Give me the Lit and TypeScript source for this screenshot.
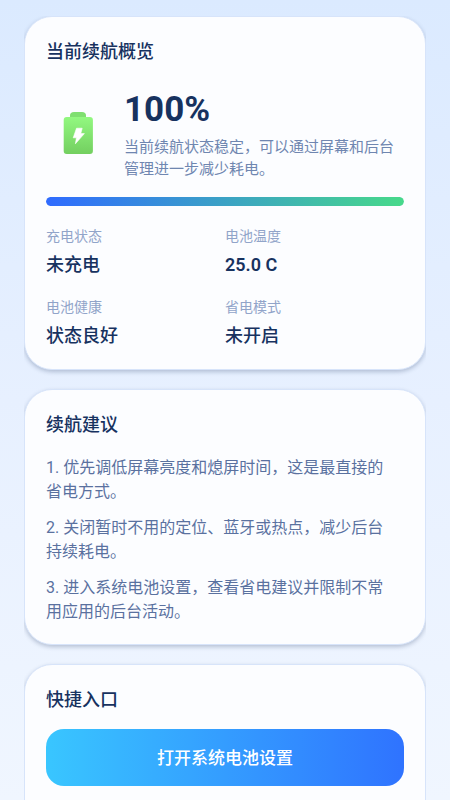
import { LitElement, html, css } from "lit";
import { customElement, property } from "lit/decorators.js";
import { classMap } from "lit/directives/class-map.js";

interface Stat {
  label: string;
  value: string;
  numeric?: boolean;
}

@customElement("battery-icon")
export class BatteryIcon extends LitElement {
  static styles = css`
    :host {
      display: block;
      width: 64px;
      height: 64px;
    }
    .glyph {
      display: block;
      width: 100%;
      height: 100%;
    }
  `;

  render() {
    return html`
      <svg class="glyph" viewBox="0 0 64 64" aria-hidden="true">
        <defs>
          <linearGradient id="body" x1="0" y1="0" x2="0" y2="1">
            <stop offset="0" stop-color="#92f880" />
            <stop offset="1" stop-color="#73cf60" />
          </linearGradient>
        </defs>
        <path d="M24 15V12.500Q24 9 28 9H36Q40 9 40 12.500V15Z" fill="#7fdf70" />
        <rect x="17.700" y="14" width="29.200" height="37" rx="3" fill="url(#body)" />
        <path
          d="M30.500 25.200H36.200L34.800 30.600H38.400L29.400 40.800L30.400 34.800H27.200Z"
          fill="#fff"
          stroke="#fff"
          stroke-width="0.6"
          stroke-linejoin="round"
        />
      </svg>
    `;
  }
}

@customElement("app-root")
export class AppRoot extends LitElement {
  @property({ type: Number }) level = 100;

  private stats: Stat[] = [
    { label: "充电状态", value: "未充电" },
    { label: "电池温度", value: "25.0 C", numeric: true },
    { label: "电池健康", value: "状态良好" },
    { label: "省电模式", value: "未开启" },
  ];

  private tips: string[] = [
    "1. 优先调低屏幕亮度和熄屏时间，这是最直接的省电方式。",
    "2. 关闭暂时不用的定位、蓝牙或热点，减少后台持续耗电。",
    "3. 进入系统电池设置，查看省电建议并限制不常用应用的后台活动。",
  ];

  static styles = css`
    :host {
      display: block;
      height: 100vh;
      overflow-y: auto;
      scrollbar-width: none;
      box-sizing: border-box;
      padding: 16px 24px 0;
      background: linear-gradient(#dbeaff, #e7f0ff 50%, #f0f6ff);
      color: #17325f;
      font-family: Roboto, "Noto Sans CJK SC", sans-serif;
    }
    .page {
      display: flex;
      flex-direction: column;
      gap: 19px;
      overflow: hidden;
    }
    .card {
      padding: 21px 21px 20px;
      border: 1px solid #d7e4fa;
      border-radius: 28px;
      background: #fcfdff;
      box-shadow: 0 2px 4px rgba(40, 60, 100, 0.28);
    }
    .card:last-child {
      padding-bottom: 48px;
    }
    h2,
    p,
    dl,
    dd,
    ol {
      margin: 0;
      padding: 0;
    }
    h2 {
      font-size: 18px;
      line-height: 28px;
      font-weight: 500;
    }
    .hero {
      display: flex;
      align-items: center;
      gap: 14px;
      margin-top: 24px;
    }
    .icon {
      flex: none;
    }
    .summary {
      display: flex;
      flex-direction: column;
      gap: 6px;
    }
    .percent {
      font-size: 35px;
      line-height: 40px;
      font-weight: 700;
    }
    .note {
      font-size: 15px;
      line-height: 22px;
      color: #6f86b0;
    }
    .track {
      height: 9px;
      margin-top: 17px;
      border-radius: 5px;
      overflow: hidden;
      background: #e3ecfb;
    }
    .fill {
      height: 100%;
      border-radius: 5px;
      background: linear-gradient(90deg, #2f6bff, #47d98a);
    }
    .stats {
      display: grid;
      grid-template-columns: 1fr 1fr;
      row-gap: 19px;
      margin-top: 20px;
    }
    .stat {
      display: flex;
      flex-direction: column;
      gap: 6px;
    }
    .label {
      font-size: 14px;
      line-height: 20px;
      color: #91a4c9;
    }
    .value {
      font-size: 18px;
      line-height: 26px;
      font-weight: 500;
    }
    .value.numeric {
      font-weight: 600;
    }
    .tips {
      display: flex;
      flex-direction: column;
      gap: 12px;
      margin-top: 17px;
      padding-right: 8px;
      list-style: none;
      font-size: 16px;
      line-height: 24px;
      color: #5a719f;
    }
    .action {
      display: block;
      width: 100%;
      margin-top: 15px;
      padding: 17px 16px 15px;
      border: 0;
      border-radius: 18px;
      background: linear-gradient(90deg, #39c6ff, #2f73ff);
      color: #fff;
      font-family: inherit;
      font-size: 17px;
      line-height: 25px;
      font-weight: 500;
      cursor: pointer;
    }
  `;

  render() {
    return html`
      <main class="page">
        <section class="card">
          <h2>当前续航概览</h2>
          <div class="hero">
            <battery-icon class="icon"></battery-icon>
            <div class="summary">
              <p class="percent">${this.level}%</p>
              <p class="note">当前续航状态稳定，可以通过屏幕和后台管理进一步减少耗电。</p>
            </div>
          </div>
          <div
            class="track"
            role="progressbar"
            aria-label="当前续航概览"
            aria-valuenow=${this.level}
          >
            <div class="fill" style="width:${this.level}%"></div>
          </div>
          <dl class="stats">
            ${this.stats.map(
              (s) => html`
                <div class="stat">
                  <dt class="label">${s.label}</dt>
                  <dd class=${classMap({ value: true, numeric: !!s.numeric })}>${s.value}</dd>
                </div>
              `
            )}
          </dl>
        </section>
        <section class="card">
          <h2>续航建议</h2>
          <ol class="tips">
            ${this.tips.map((t) => html`<li>${t}</li>`)}
          </ol>
        </section>
        <section class="card">
          <h2>快捷入口</h2>
          <button class="action" type="button">打开系统电池设置</button>
        </section>
      </main>
    `;
  }
}
